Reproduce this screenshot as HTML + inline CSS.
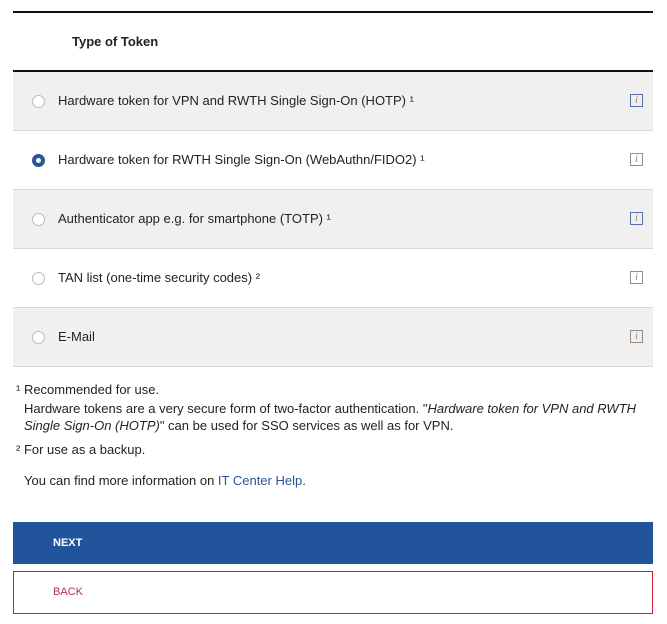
<!DOCTYPE html>
<html><head><style>
body{margin:0;background:#fff;font-family:"Liberation Sans",Arial,sans-serif;color:#222;width:667px;height:624px;position:relative;overflow:hidden}
.t{position:absolute;left:13px;width:640px;top:11px;border-top:2px solid #111}
.h{height:57px;border-bottom:2px solid #111;font-weight:bold;font-size:13px;line-height:57px;padding-left:59px}
.r{height:58px;border-bottom:1px solid #d8d8d8;position:relative;font-size:13px;line-height:58px}
.g{background:#f0f0f0}
.r .tx{position:absolute;left:45px}
.rad{position:absolute;left:19px;top:23px;width:11px;height:11px;border:1px solid #bbb;border-radius:50%;background:#fff}
.sel{border:4px solid #2a5599;width:5px;height:5px;background:#fff}
.i{position:absolute;left:617px;top:22px;width:11px;height:11px;border:1px solid #5b6ea8;font:italic 10px/11px "Liberation Serif",serif;text-align:center;color:#a07a70}
.ib{border-color:#9a8c80}
.f{position:absolute;font-size:13px;line-height:17px}
.btn{position:absolute;left:13px;width:640px;font-size:11px}
</style></head><body>
<div class="t">
<div class="h">Type of Token</div>
<div class="r g"><span class="rad"></span><span class="tx">Hardware token for VPN and RWTH Single Sign-On (HOTP) ¹</span><span class="i">i</span></div>
<div class="r"><span class="rad sel"></span><span class="tx">Hardware token for RWTH Single Sign-On (WebAuthn/FIDO2) ¹</span><span class="i ib">i</span></div>
<div class="r g"><span class="rad"></span><span class="tx">Authenticator app e.g. for smartphone (TOTP) ¹</span><span class="i">i</span></div>
<div class="r"><span class="rad"></span><span class="tx">TAN list (one-time security codes) ²</span><span class="i ib">i</span></div>
<div class="r g"><span class="rad"></span><span class="tx">E-Mail</span><span class="i ib">i</span></div>
</div>
<div class="f" style="left:16px;top:381px">¹ Recommended for use.</div>
<div class="f" style="left:24px;top:400px;width:625px">Hardware tokens are a very secure form of two-factor authentication. "<i>Hardware token for VPN and RWTH Single Sign-On (HOTP)</i>" can be used for SSO services as well as for VPN.</div>
<div class="f" style="left:16px;top:441px">² For use as a backup.</div>
<div class="f" style="left:24px;top:472px">You can find more information on <span style="color:#2a5599">IT Center Help</span>.</div>
<div class="btn" style="top:522px;height:42px;background:#22549c;color:#fff;font-weight:bold;line-height:42px;padding-left:40px;box-sizing:border-box">NEXT</div>
<div class="btn" style="top:571px;height:43px;border:1px solid #cc2030;color:#b03050;line-height:41px;padding-left:39px;box-sizing:border-box">BACK</div>
</body></html>
